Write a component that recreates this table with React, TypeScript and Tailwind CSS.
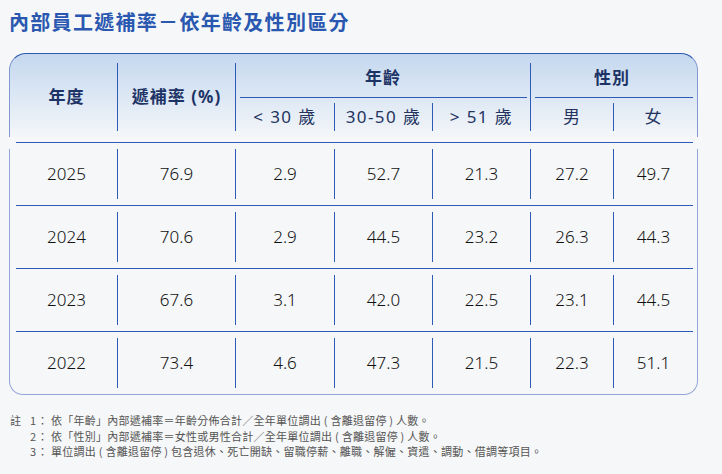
const rows = [
  ["2025", "76.9", "2.9", "52.7", "21.3", "27.2", "49.7"],
  ["2024", "70.6", "2.9", "44.5", "23.2", "26.3", "44.3"],
  ["2023", "67.6", "3.1", "42.0", "22.5", "23.1", "44.5"],
  ["2022", "73.4", "4.6", "47.3", "21.5", "22.3", "51.1"],
];

const notes = [
  ["註", "1：", "依「年齡」內部遞補率＝年齡分佈合計／全年單位調出 ( 含離退留停 ) 人數。"],
  ["", "2：", "依「性別」內部遞補率＝女性或男性合計／全年單位調出 ( 含離退留停 ) 人數。"],
  ["", "3：", "單位調出 ( 含離退留停 ) 包含退休、死亡開缺、留職停薪、離職、解僱、資遣、調動、借調等項目。"],
];

const cols = "grid grid-cols-[102px_118px_99px_98px_98px_83px_79px]";

export default function App() {
  return (
    <div
      className="min-h-screen w-[722px] bg-[#f5f7f8] pl-[9px] pt-[8px]"
      style={{ fontFamily: '"Noto Sans", "Noto Sans CJK TC", sans-serif' }}
    >
      <h1
        className="text-[20px] leading-[28px] font-bold tracking-[1.3px] text-[#2a58b0]"
        style={{ fontFamily: '"Noto Sans CJK TC", sans-serif' }}
      >
        內部員工遞補率－依年齡及性別區分
      </h1>

      <div className="mt-[17px] w-[689px]">
        {/* header */}
        <div className="h-[84px] rounded-t-[17px] border-t border-x border-t-[#2c59ad] border-x-[#8198d2] bg-linear-to-b from-[#c4d8ef] to-[#f4f6f9] pt-[9px] pb-[6px] pl-[6px] pr-[4px]">
          <div className="flex h-[68px] text-[17px] tracking-[1px] text-[#1d3366]">
            <div className="w-[102px] border-r border-[#2d5bb5] flex items-center justify-center font-bold">年度</div>
            <div className="w-[118px] border-r border-[#2d5bb5] flex items-center justify-center font-bold">遞補率 (%)</div>
            <div className="w-[295px] border-r border-[#2d5bb5] flex flex-col">
              <div className="h-[34px] pb-[5px] flex items-center justify-center font-bold">年齡</div>
              <div className="h-px ml-[4px] mr-[3px] bg-[#2d5bb5]" />
              <div className="mt-[5px] h-[28px] flex text-[#24345f] tracking-[1.4px]">
                <div className="w-[99px] border-r border-[#2d5bb5] flex items-center justify-center">&lt; 30 歲</div>
                <div className="w-[98px] border-r border-[#2d5bb5] flex items-center justify-center">30-50 歲</div>
                <div className="flex-1 flex items-center justify-center">&gt; 51 歲</div>
              </div>
            </div>
            <div className="flex-1 flex flex-col">
              <div className="h-[34px] pb-[5px] flex items-center justify-center font-bold">性別</div>
              <div className="h-px ml-[4px] bg-[#2d5bb5]" />
              <div className="mt-[5px] h-[28px] flex text-[#24345f]">
                <div className="w-[83px] border-r border-[#2d5bb5] flex items-center justify-center">男</div>
                <div className="flex-1 flex items-center justify-center">女</div>
              </div>
            </div>
          </div>
        </div>

        <div className="mt-[5px] ml-[7px] w-[677px] h-px bg-[#2d5bb5]" />

        {/* body */}
        <div className="mt-[6px] rounded-b-[14px] border-x border-b border-[#93a4d8] pl-[6px] pr-[4px] pb-[6px]">
          {rows.map((r, i) => (
            <div key={r[0]}>
              {i > 0 && <div className="my-[6px] h-px bg-[#2d5bb5]" />}
              <div className={`${cols} h-[50px] text-[17px] font-light text-[#111]`}>
                {r.map((v, j) => (
                  <div
                    key={j}
                    className={`flex items-center justify-center ${j < 6 ? "border-r border-[#2d5bb5]" : ""}`}
                  >
                    {v}
                  </div>
                ))}
              </div>
            </div>
          ))}
        </div>
      </div>

      {/* notes */}
      <div
        className="mt-[18px] text-[11px] leading-[15.5px] text-[#555]"
        style={{ fontFamily: '"Noto Sans CJK TC", sans-serif' }}
      >
        {notes.map(([pre, num, text]) => (
          <div key={num} className="flex">
            <span className="w-[42px] pl-px flex">
              <span>{pre}</span>
              <span className="ml-auto pr-[2px] tracking-[1px]">{num}</span>
            </span>
            <span className="tracking-[0.25px]">{text}</span>
          </div>
        ))}
      </div>
    </div>
  );
}
